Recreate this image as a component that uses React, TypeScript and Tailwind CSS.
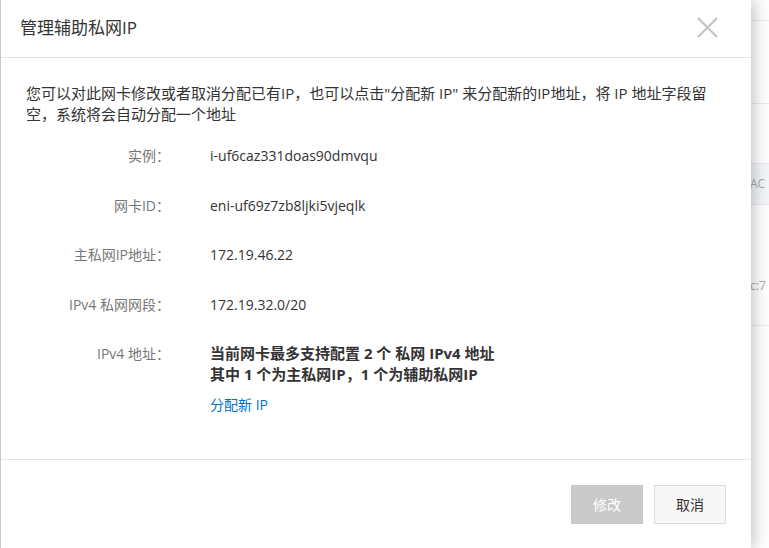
import React from 'react'

const font = { fontFamily: '"Open Sans", "Noto Sans CJK SC", sans-serif' }

const rows = [
  { label: '实例：', value: 'i-uf6caz331doas90dmvqu' },
  { label: '网卡ID：', value: 'eni-uf69z7zb8ljki5vjeqlk' },
  { label: '主私网IP地址：', value: '172.19.46.22' },
  { label: 'IPv4 私网网段：', value: '172.19.32.0/20' },
]

function CloseIcon() {
  return (
    <svg width="21" height="21" viewBox="0 0 21 21" fill="none">
      <path d="M1 1L20 20M20 1L1 20" stroke="#c2c2c2" strokeWidth="2" />
    </svg>
  )
}

function BackgroundPage() {
  // the list page behind the drawer, only a sliver shows on the right
  return (
    <div className="flex flex-col pt-[20px] pl-[748px] text-[12px] text-[#aaa]">
      <div className="h-[83px] border-t border-[#eee]" />
      <div className="h-[60px] border-t border-[#eee]" />
      <div className="h-[42px] border-y border-[#e6e8ee] bg-[#f4f5f9] flex items-center pl-[2px] whitespace-nowrap">AC</div>
      <div className="h-[120px] flex items-end pb-[30px] pl-[2px] whitespace-nowrap">c:7</div>
      <div className="border-t border-[#eee]" />
    </div>
  )
}

export default function App() {
  return (
    <div className="relative h-[548px] w-full overflow-hidden bg-white" style={font}>
      <BackgroundPage />

      <div className="absolute left-0 top-0 bottom-0 w-[751px] bg-white border-l border-[#c8c8c8] shadow-[4px_0_14px_rgba(0,0,0,0.22)] flex flex-col">
        <div className="h-[58px] flex items-center justify-between pl-[19px] pr-[33px] border-b border-[#e5e5e5]">
          <h1 className="text-[17px] text-[#333] pb-[1px]">管理辅助私网IP</h1>
          <button className="pb-[2px]">
            <CloseIcon />
          </button>
        </div>

        <div className="px-[25px] pt-[25px] pb-[44px] border-b border-[#e5e5e5]">
          <p className="text-[15px] leading-[21px] text-[#333]">
            您可以对此网卡修改或者取消分配已有IP，也可以点击"分配新 IP" 来分配新的IP地址，将 IP 地址字段留空，系统将会自动分配一个地址
          </p>

          <div className="flex flex-col gap-y-[28.5px] mt-[20px] text-[14px] leading-[21px]">
            {rows.map(r => (
              <div key={r.label} className="flex">
                <div className="w-[144px] text-right text-[#777]">{r.label}</div>
                <div className="ml-[40px] text-[#333]">{r.value}</div>
              </div>
            ))}
            <div className="flex">
              <div className="w-[144px] text-right text-[#777]">IPv4 地址：</div>
              <div className="ml-[40px]">
                <div className="font-bold text-[15px] text-[#333]">当前网卡最多支持配置 2 个 私网 IPv4 地址</div>
                <div className="font-bold text-[15px] text-[#333]">其中 1 个为主私网IP，1 个为辅助私网IP</div>
                <a className="block mt-[9px] text-[#0070cc] cursor-pointer">分配新 IP</a>
              </div>
            </div>
          </div>
        </div>

        <div className="flex justify-end gap-[11px] pt-[25px] pr-[25px]">
          <button disabled className="w-[72px] h-[39px] bg-[#c9c9c9] text-white text-[14px]">修改</button>
          <button className="w-[72px] h-[39px] bg-[#f7f7f7] border border-[#dcdcdc] text-[#333] text-[14px]">取消</button>
        </div>
      </div>
    </div>
  )
}
